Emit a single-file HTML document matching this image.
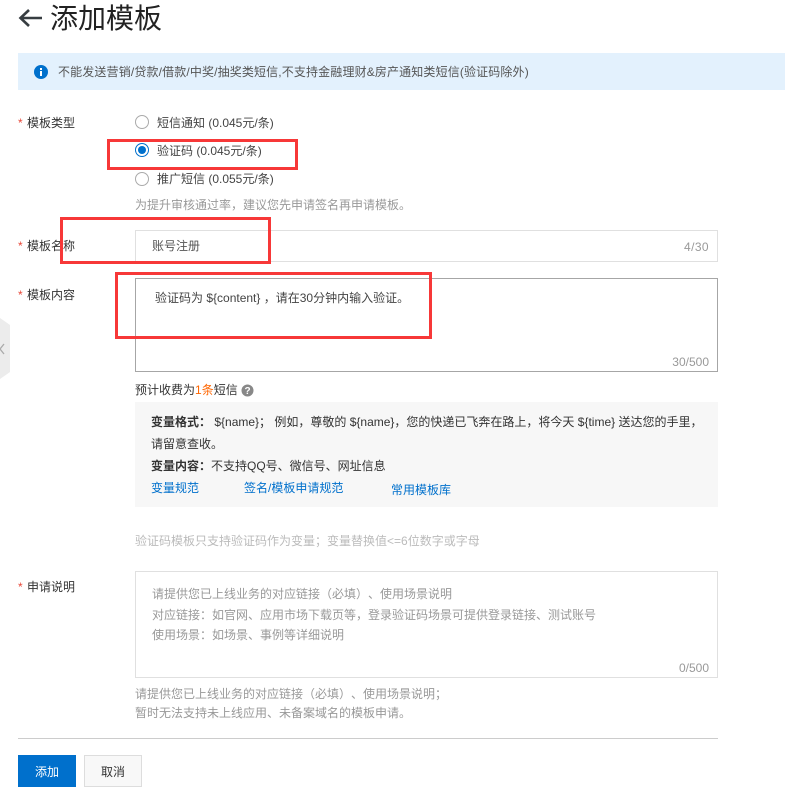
<!DOCTYPE html>
<html lang="zh-CN">
<head>
<meta charset="utf-8">
<title>添加模板</title>
<style>
html,body{margin:0;padding:0;background:#fff;}
body{position:relative;width:785px;height:798px;overflow:hidden;font-family:"Liberation Sans","Noto Sans CJK SC",sans-serif;font-size:12px;color:#333;text-spacing-trim:space-all;}
.t{position:absolute;white-space:nowrap;line-height:16px;font-size:12px;}
.b{position:absolute;box-sizing:border-box;}
.g{color:#999;}
.l{color:#0070cc;}
.s{color:#e84738;margin-right:4.300px;}
.red{position:absolute;box-sizing:border-box;border:3px solid #f73838;}
.radio{position:absolute;box-sizing:border-box;width:14px;height:14px;border-radius:50%;border:1px solid #aaa;background:#fff;left:135px;}
</style>
</head>
<body>
<svg style="position:absolute;left:18px;top:8px" width="25" height="20" viewBox="0 0 25 20"><path d="M24 10H2M11 2L2.500 10L11 18" fill="none" stroke="#373d41" stroke-width="2.600"/></svg>
<div class="t" style="left:50px;top:1px;font-size:28px;line-height:36px;color:#222;">添加模板</div>

<div class="b" style="left:18px;top:53px;width:767px;height:37px;background:#e3f1fd;"></div>
<svg style="position:absolute;left:34px;top:65px" width="14" height="14" viewBox="0 0 14 14"><circle cx="7" cy="7" r="7" fill="#0070cc"/><rect x="6" y="6" width="2" height="5" fill="#fff"/><rect x="6" y="3" width="2" height="2" fill="#fff"/></svg>
<div class="t" style="left:58px;top:64px;color:#555;letter-spacing:.14px;">不能发送营销/贷款/借款/中奖/抽奖类短信,不支持金融理财&amp;房产通知类短信(验证码除外)</div>

<div class="t" style="left:18px;top:115px;"><span class="s">*</span>模板类型</div>
<div class="radio" style="top:115px;"></div>
<div class="t" style="left:157px;top:115px;color:#444;">短信通知 (0.045元/条)</div>
<div class="radio" style="top:143px;border-color:#0070cc;"></div>
<div class="b" style="left:138px;top:146px;width:8px;height:8px;border-radius:50%;background:#0070cc;"></div>
<div class="t" style="left:157px;top:143px;color:#444;">验证码 (0.045元/条)</div>
<div class="radio" style="top:172px;"></div>
<div class="t" style="left:157px;top:171px;color:#444;">推广短信 (0.055元/条)</div>
<div class="t g" style="left:135px;top:197px;">为提升审核通过率，建议您先申请签名再申请模板。</div>

<div class="t" style="left:18px;top:238px;"><span class="s">*</span>模板名称</div>
<div class="b" style="left:135px;top:230px;width:583px;height:32px;border:1px solid #e0e0e0;"></div>
<div class="t" style="left:152px;top:238px;color:#555;">账号注册</div>
<div class="t g" style="right:76px;top:239px;letter-spacing:.4px;">4/30</div>

<div class="t" style="left:18px;top:287px;"><span class="s">*</span>模板内容</div>
<div class="b" style="left:135px;top:278px;width:583px;height:94px;border:1px solid #a6a6a6;"></div>
<div class="t" style="left:155px;top:290px;color:#444;">验证码为 ${content} ，请在30分钟内输入验证。</div>
<div class="t g" style="right:76px;top:354px;">30/500</div>

<div class="t" style="left:135px;top:382px;">预计收费为<span style="color:#f60;">1条</span>短信</div>
<svg style="position:absolute;left:241px;top:384px" width="13" height="13" viewBox="0 0 13 13"><circle cx="6.500" cy="6.500" r="6" fill="#888"/><text x="6.500" y="10" font-size="10" font-weight="bold" text-anchor="middle" fill="#fff" font-family="Liberation Sans">?</text></svg>

<div class="b" style="left:135px;top:402px;width:583px;height:105px;background:#f7f7f7;"></div>
<div class="t" style="left:151px;top:414px;color:#333;"><b>变量格式：</b> ${name}； 例如，尊敬的 ${name}，您的快递已飞奔在路上，将今天 ${time} 送达您的手里，</div>
<div class="t" style="left:151px;top:436px;color:#333;">请留意查收。</div>
<div class="t" style="left:151px;top:458px;color:#333;"><b>变量内容：</b>不支持QQ号、微信号、网址信息</div>
<div class="t l" style="left:151px;top:480px;">变量规范</div>
<div class="t l" style="left:244px;top:480px;">签名/模板申请规范</div>
<div class="t l" style="left:391px;top:482px;">常用模板库</div>

<div class="t" style="left:135px;top:533px;color:#bbb;">验证码模板只支持验证码作为变量；变量替换值&lt;=6位数字或字母</div>

<div class="t" style="left:18px;top:579px;"><span class="s">*</span>申请说明</div>
<div class="b" style="left:135px;top:571px;width:583px;height:107px;border:1px solid #e0e0e0;"></div>
<div class="t g" style="left:152px;top:586px;">请提供您已上线业务的对应链接（必填）、使用场景说明</div>
<div class="t g" style="left:152px;top:607px;">对应链接：如官网、应用市场下载页等，登录验证码场景可提供登录链接、测试账号</div>
<div class="t g" style="left:152px;top:627px;">使用场景：如场景、事例等详细说明</div>
<div class="t g" style="right:76px;top:660px;">0/500</div>
<div class="t g" style="left:135px;top:686px;">请提供您已上线业务的对应链接（必填）、使用场景说明；</div>
<div class="t g" style="left:135px;top:705px;">暂时无法支持未上线应用、未备案域名的模板申请。</div>

<div class="b" style="left:18px;top:738px;width:700px;height:1px;background:#ccc;"></div>
<div class="b" style="left:18px;top:755px;width:58px;height:32px;background:#0070cc;color:#fff;text-align:center;line-height:34px;">添加</div>
<div class="b" style="left:84px;top:755px;width:58px;height:32px;background:#f8f8f8;border:1px solid #ddd;color:#333;text-align:center;line-height:32px;">取消</div>

<svg style="position:absolute;left:0;top:318px" width="11" height="62" viewBox="0 0 11 62"><path d="M0 0L10 7V54L0 61Z" fill="#ececec"/><path d="M4 26L0 31L4 36" fill="none" stroke="#aaa" stroke-width="1.300"/></svg>

<div class="red" style="left:107px;top:139px;width:191px;height:31px;"></div>
<div class="red" style="left:60px;top:217px;width:211px;height:47px;"></div>
<div class="red" style="left:115px;top:272px;width:317px;height:67px;"></div>
</body>
</html>
